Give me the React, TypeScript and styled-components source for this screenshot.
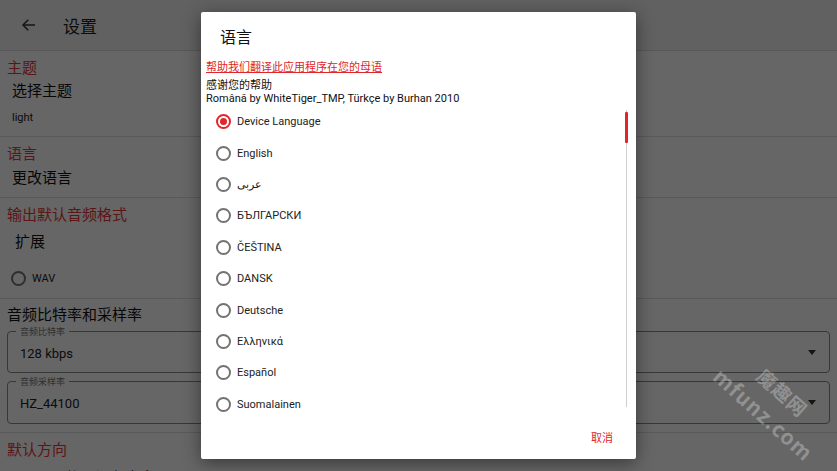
import React from "react";
import styled, { createGlobalStyle } from "styled-components";

const GlobalStyle = createGlobalStyle`
  html, body { margin: 0; padding: 0; width: 837px; height: 471px; overflow: hidden; }
  body { font-family: Roboto, "Noto Sans CJK SC", sans-serif; background: #fff; }
  * { box-sizing: border-box; }
`;

const RED = "#e0262b";
const PAGE_RED = "#e53935";

const Screen = styled.div`
  position: relative;
  width: 837px;
  height: 471px;
  overflow: hidden;
  background: #fff;
`;

const AppBar = styled.header`
  height: 51px;
  display: flex;
  align-items: center;
  padding-left: 20px;
  gap: 25px;
  background: #f2f2f2;
  border-bottom: 1px solid #dcdcdc;
  color: #222;
`;

const AppTitle = styled.div`
  font-size: 17px;
  font-family: "Noto Sans CJK SC", sans-serif;
`;

const Section = styled.section<{ $pt?: number; $pb?: number; $last?: boolean }>`
  display: flex;
  flex-direction: column;
  padding: ${(p) => p.$pt ?? 6}px 7px ${(p) => p.$pb ?? 10}px 7px;
  border-bottom: ${(p) => (p.$last ? "none" : "1px solid #dedede")};
`;

const SectionTitle = styled.div<{ $plain?: boolean }>`
  font-family: "Noto Sans CJK SC", sans-serif;
  font-size: 15px;
  line-height: 20px;
  color: ${(p) => (p.$plain ? "#111" : PAGE_RED)};
`;

const ItemTitle = styled.div<{ $mt: number; $pl?: number }>`
  font-family: "Noto Sans CJK SC", sans-serif;
  font-size: 15px;
  line-height: 20px;
  color: #111;
  margin-top: ${(p) => p.$mt}px;
  padding-left: ${(p) => p.$pl ?? 5}px;
`;

const ItemSub = styled.div`
  font-size: 11px;
  line-height: 16px;
  color: #222;
  margin-top: 10px;
  padding-left: 5px;
`;

const PageRadioRow = styled.div<{ $mt: number }>`
  display: flex;
  align-items: center;
  gap: 6px;
  height: 20px;
  margin-top: ${(p) => p.$mt}px;
  padding-left: 4px;
  font-size: 11px;
  color: #222;
`;

const RadioCircle = styled.span<{ $checked?: boolean }>`
  width: 15px;
  height: 15px;
  border-radius: 50%;
  border: 2px solid ${(p) => (p.$checked ? RED : "#737373")};
  display: inline-flex;
  align-items: center;
  justify-content: center;
  flex: none;
  &::after {
    content: "";
    width: 7px;
    height: 7px;
    border-radius: 50%;
    background: ${(p) => (p.$checked ? RED : "transparent")};
  }
`;

const OutlinedBox = styled.div<{ $mt: number; $h: number }>`
  position: relative;
  height: ${(p) => p.$h}px;
  margin-top: ${(p) => p.$mt}px;
  border: 1px solid #8a8a8a;
  border-radius: 4px;
  display: flex;
  align-items: center;
  justify-content: space-between;
  padding: 2px 13px 0 12px;
  font-size: 13px;
  color: #222;
`;

const BoxLabel = styled.span`
  position: absolute;
  top: -6px;
  left: 8px;
  padding: 0 4px;
  background: #fff;
  font-family: "Noto Sans CJK SC", sans-serif;
  font-size: 9px;
  line-height: 11px;
  color: #777;
`;

const Caret = styled.span`
  width: 0;
  height: 0;
  border-left: 4px solid transparent;
  border-right: 4px solid transparent;
  border-top: 5px solid #333;
  margin-top: -2px;
`;

const Overlay = styled.div`
  position: absolute;
  inset: 0;
  background: rgba(0, 0, 0, 0.6);
`;

const Dialog = styled.div`
  position: absolute;
  left: 201px;
  top: 12px;
  width: 435px;
  height: 447px;
  background: #fff;
  border-radius: 2px;
  box-shadow: 0 4px 18px rgba(0, 0, 0, 0.45);
  display: flex;
  flex-direction: column;
`;

const DialogTitle = styled.div`
  font-family: "Noto Sans CJK SC", sans-serif;
  font-size: 16px;
  line-height: 22px;
  color: #111;
  margin: 13px 0 0 19px;
`;

const HelpLink = styled.a`
  font-family: "Noto Sans CJK SC", sans-serif;
  font-size: 11px;
  line-height: 14px;
  color: ${RED};
  text-decoration: underline;
  margin: 12px 0 0 5px;
`;

const Credits = styled.div`
  font-family: Roboto, "Noto Sans CJK SC", sans-serif;
  font-size: 11px;
  line-height: 13px;
  color: #111;
  margin: 6px 0 0 5px;
`;

const ListArea = styled.div`
  position: relative;
  height: 314px;
  margin-top: 1px;
  overflow: hidden;
`;

const LangRow = styled.div`
  display: flex;
  align-items: center;
  gap: 6px;
  height: 31.4px;
  padding-left: 15px;
  font-size: 11px;
  color: #222;
`;

const Track = styled.div`
  position: absolute;
  left: 425px;
  top: 4px;
  width: 1px;
  height: 297px;
  background: #cfcfcf;
`;

const Thumb = styled.div`
  position: absolute;
  left: 424px;
  top: 6px;
  width: 3px;
  height: 31px;
  border-radius: 1px;
  background: ${RED};
`;

const Actions = styled.div`
  display: flex;
  justify-content: flex-end;
  padding: 9px 23px 0 0;
`;

const CancelButton = styled.button`
  border: none;
  background: none;
  padding: 0;
  font-family: "Noto Sans CJK SC", sans-serif;
  font-size: 11px;
  line-height: 16px;
  color: ${RED};
`;

const Watermark = styled.div<{ $x: number; $y: number; $size: number }>`
  position: absolute;
  left: ${(p) => p.$x}px;
  top: ${(p) => p.$y}px;
  transform: translate(-50%, -50%) rotate(42deg);
  font-family: "Noto Sans CJK SC", sans-serif;
  font-weight: 700;
  font-size: ${(p) => p.$size}px;
  color: rgba(255, 255, 255, 0.28);
  white-space: nowrap;
  letter-spacing: 1px;
`;

const languages = [
  "Device Language",
  "English",
  "عربى",
  "БЪЛГАРСКИ",
  "ČEŠTINA",
  "DANSK",
  "Deutsche",
  "Ελληνικά",
  "Español",
  "Suomalainen",
];

function BackArrow() {
  return (
    <svg width="18" height="18" viewBox="0 0 24 24" fill="none" stroke="#333" strokeWidth="2">
      <path d="M20 12H4" />
      <path d="M11 5l-7 7 7 7" />
    </svg>
  );
}

export default function App() {
  return (
    <>
      <GlobalStyle />
      <Screen>
        <AppBar>
          <BackArrow />
          <AppTitle>设置</AppTitle>
        </AppBar>
        <Section $pb={10}>
          <SectionTitle>主题</SectionTitle>
          <ItemTitle $mt={3}>选择主题</ItemTitle>
          <ItemSub>light</ItemSub>
        </Section>
        <Section>
          <SectionTitle>语言</SectionTitle>
          <ItemTitle $mt={4}>更改语言</ItemTitle>
        </Section>
        <Section>
          <SectionTitle>输出默认音频格式</SectionTitle>
          <ItemTitle $mt={7} $pl={8}>扩展</ItemTitle>
          <PageRadioRow $mt={17}>
            <RadioCircle />
            WAV
          </PageRadioRow>
        </Section>
        <Section $pt={5} $pb={8}>
          <SectionTitle $plain>音频比特率和采样率</SectionTitle>
          <OutlinedBox $mt={7} $h={42}>
            <BoxLabel>音频比特率</BoxLabel>
            128 kbps
            <Caret />
          </OutlinedBox>
          <OutlinedBox $mt={8} $h={43}>
            <BoxLabel>音频采样率</BoxLabel>
            HZ_44100
            <Caret />
          </OutlinedBox>
        </Section>
        <Section $last>
          <SectionTitle>默认方向</SectionTitle>
          <ItemTitle $mt={8} $pl={58}>使用设备方向</ItemTitle>
        </Section>

        <Overlay />
        <Watermark $x={783} $y={392} $size={19}>魔趣网</Watermark>
        <Watermark $x={764} $y={414} $size={21}>mfunz.com</Watermark>

        <Dialog>
          <DialogTitle>语言</DialogTitle>
          <HelpLink>帮助我们翻译此应用程序在您的母语</HelpLink>
          <Credits>
            感谢您的帮助
            <br />
            Română by WhiteTiger_TMP, Türkçe by Burhan 2010
          </Credits>
          <ListArea>
            {languages.map((l, i) => (
              <LangRow key={l}>
                <RadioCircle $checked={i === 0} />
                {l}
              </LangRow>
            ))}
            <Track />
            <Thumb />
          </ListArea>
          <Actions>
            <CancelButton>取消</CancelButton>
          </Actions>
        </Dialog>
      </Screen>
    </>
  );
}
